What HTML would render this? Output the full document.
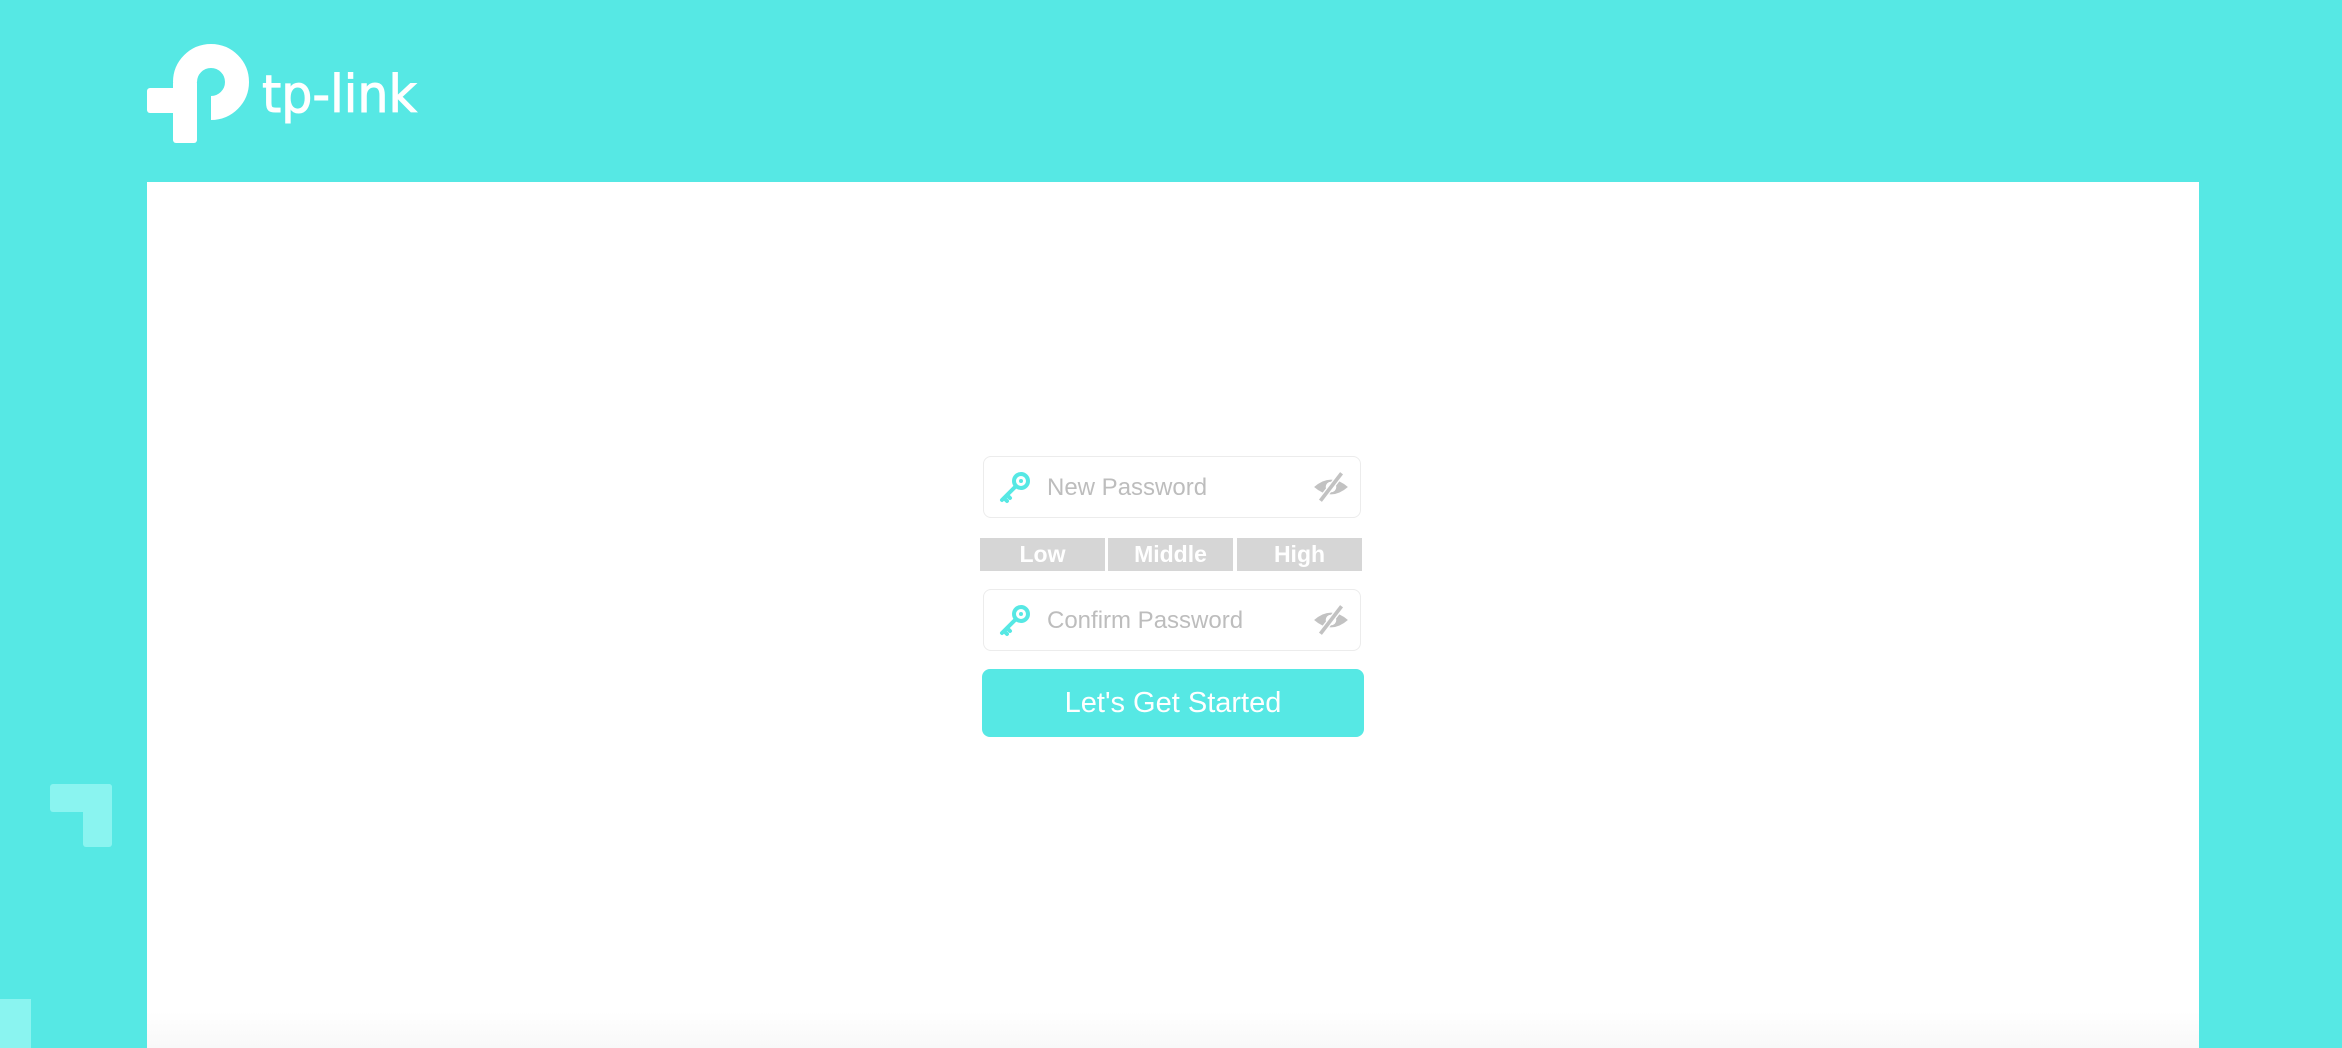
<!DOCTYPE html>
<html><head><meta charset="utf-8"><style>
html,body{margin:0;padding:0}
body{width:2342px;height:1048px;background:#56e8e4;position:relative;overflow:hidden;font-family:"Liberation Sans",sans-serif}
.panel{position:absolute;left:147px;top:182px;width:2052px;height:866px;background:linear-gradient(#fff 0,#fff 830px,#f8f8f8 866px)}
.inp{position:absolute;left:983px;width:378px;height:62px;border:1px solid #ececec;border-radius:8px;background:#fff;box-sizing:border-box}
.inp span{position:absolute;left:63px;top:17px;font-size:24px;color:#bdbdbd}
.inp .key{position:absolute;left:14px;top:14px}
.inp .eye{position:absolute;right:10px;top:14px}
.bar{position:absolute;top:538px;height:33px;background:#d6d6d6;color:#fff;font-weight:bold;font-size:23px;text-align:center;line-height:33px}
.btn{position:absolute;left:982px;top:669px;width:382px;height:68px;background:#56e8e4;border-radius:8px;color:#fff;font-size:29px;text-align:center;line-height:68px}
.dec{position:absolute;background:#8af4f0}
</style></head><body>
<svg style="position:absolute;left:140px;top:40px" width="290" height="110" viewBox="140 40 290 110">
<g fill="#fff">
<rect x="147" y="88" width="50" height="25" rx="3"/>
<rect x="173" y="80" width="24" height="63" rx="3"/>
</g>
<path d="M185 82 A26 26 0 1 1 211 108" fill="none" stroke="#fff" stroke-width="24"/>
<text x="262" y="112" font-family="DejaVu Sans,sans-serif" font-size="52" textLength="155" lengthAdjust="spacingAndGlyphs" fill="#fff" stroke="#fff" stroke-width="1">tp-link</text>
</svg>
<div class="dec" style="left:50px;top:784px;width:62px;height:28px;border-radius:3px"></div>
<div class="dec" style="left:83px;top:784px;width:29px;height:63px;border-radius:3px"></div>
<div class="dec" style="left:0;top:999px;width:31px;height:49px"></div>
<div class="panel"></div>
<div class="inp" style="top:456px">
<svg class="key" width="34" height="34" viewBox="0 0 34 34"><circle cx="23" cy="10" r="7" fill="none" stroke="#56e8e4" stroke-width="4"/><circle cx="23" cy="10" r="2" fill="#56e8e4"/><path d="M18 15 L4 29 M9 24 L12 27 M6 27 L9 30" stroke="#56e8e4" stroke-width="4" stroke-linecap="round"/></svg>
<span>New Password</span>
<svg class="eye" width="38" height="32" viewBox="0 0 36 30"><path d="M2 15 Q18 1 34 15 Q18 29 2 15Z" fill="#c2c2c2"/><circle cx="18" cy="15" r="5" fill="#fff"/><path d="M8 28 L28 2" stroke="#fff" stroke-width="6"/><path d="M8 28 L28 2" stroke="#c2c2c2" stroke-width="3.5"/></svg>
</div>
<div class="bar" style="left:980px;width:125px">Low</div>
<div class="bar" style="left:1108px;width:125px">Middle</div>
<div class="bar" style="left:1237px;width:125px">High</div>
<div class="inp" style="top:589px">
<svg class="key" width="34" height="34" viewBox="0 0 34 34"><circle cx="23" cy="10" r="7" fill="none" stroke="#56e8e4" stroke-width="4"/><circle cx="23" cy="10" r="2" fill="#56e8e4"/><path d="M18 15 L4 29 M9 24 L12 27 M6 27 L9 30" stroke="#56e8e4" stroke-width="4" stroke-linecap="round"/></svg>
<span>Confirm Password</span>
<svg class="eye" width="38" height="32" viewBox="0 0 36 30"><path d="M2 15 Q18 1 34 15 Q18 29 2 15Z" fill="#c2c2c2"/><circle cx="18" cy="15" r="5" fill="#fff"/><path d="M8 28 L28 2" stroke="#fff" stroke-width="6"/><path d="M8 28 L28 2" stroke="#c2c2c2" stroke-width="3.5"/></svg>
</div>
<div class="btn">Let's Get Started</div>
</body></html>
